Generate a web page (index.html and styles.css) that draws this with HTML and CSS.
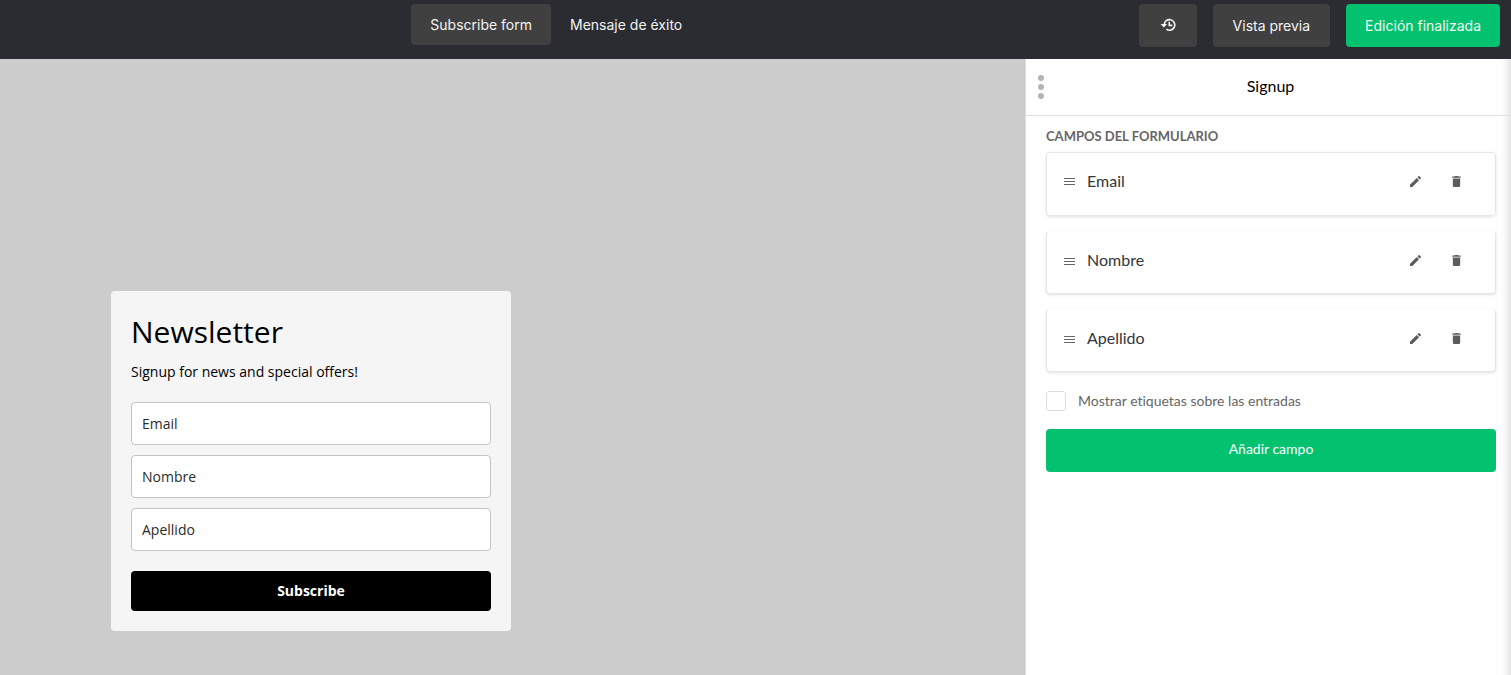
FILE: index.html
```html
<!DOCTYPE html>
<html lang="es">
<head>
    <meta charset="UTF-8">
    <meta name="viewport" content="width=device-width, initial-scale=1.0">
    <title>Editor de formulario</title>
    <link rel="stylesheet" href="styles.css">
</head>
<body>

<!-- Iconos compartidos -->
<svg class="sprite" aria-hidden="true">
    <symbol id="icon-drag" viewBox="0 0 12 12">
        <path d="M1 3.5h11M1 6.5h11M1 9.5h11" fill="none" stroke="currentColor" stroke-width="1"/>
    </symbol>
    <symbol id="icon-edit" viewBox="3 3 18 18">
        <path d="M3 17.25V21h3.75L17.81 9.94l-3.75-3.75L3 17.25zM20.71 7.04a1 1 0 0 0 0-1.41l-2.34-2.34a1 1 0 0 0-1.41 0l-1.83 1.83 3.75 3.75 1.83-1.83z" fill="currentColor"/>
    </symbol>
    <symbol id="icon-delete" viewBox="3 3 18 18">
        <path d="M6 19c0 1.1.9 2 2 2h8c1.1 0 2-.9 2-2V7H6v12zM19 4h-3.5l-1-1h-5l-1 1H5v2h14V4z" fill="currentColor"/>
    </symbol>
</svg>

<header class="topbar">
    <nav class="tabs">
        <button type="button" class="tab active">Subscribe form</button>
        <button type="button" class="tab">Mensaje de éxito</button>
    </nav>
    <div class="actions">
        <button type="button" class="btn" aria-label="Historial">
            <svg width="18" height="16" viewBox="0 0 18 16" fill="none" stroke="currentColor">
                <path d="M5.2 6.8A5.3 5.3 0 1 1 7.4 11.2" stroke-width="1.6"/>
                <path d="M1.6 6h6.6L4.9 9.6z" fill="currentColor" stroke="none"/>
                <path d="M10.3 3.8v3.6h3" stroke-width="1.6"/>
            </svg>
        </button>
        <button type="button" class="btn">Vista previa</button>
        <button type="button" class="btn btn-done">Edición finalizada</button>
    </div>
</header>

<div class="editor">
    <main class="canvas">
        <form class="form-card">
            <h1>Newsletter</h1>
            <p>Signup for news and special offers!</p>
            <input type="email" placeholder="Email" aria-label="Email">
            <input type="text" placeholder="Nombre" aria-label="Nombre">
            <input type="text" placeholder="Apellido" aria-label="Apellido">
            <button type="button" class="subscribe">Subscribe</button>
        </form>
    </main>

    <aside class="sidebar">
        <div class="sidebar-header">
            <button type="button" class="menu" aria-label="Menú">
                <svg width="6" height="24" viewBox="0 0 6 24" fill="currentColor">
                    <circle cx="3" cy="3" r="3"/>
                    <circle cx="3" cy="12" r="3"/>
                    <circle cx="3" cy="21" r="3"/>
                </svg>
            </button>
            <h2>Signup</h2>
        </div>

        <div class="sidebar-body">
            <h3>CAMPOS DEL FORMULARIO</h3>
            <ul class="fields">
                <li class="field">
                    <svg class="drag"><use href="#icon-drag"/></svg>
                    <span class="field-name">Email</span>
                    <button type="button" class="icon-btn" aria-label="Editar Email"><svg><use href="#icon-edit"/></svg></button>
                    <button type="button" class="icon-btn" aria-label="Eliminar Email"><svg><use href="#icon-delete"/></svg></button>
                </li>
                <li class="field">
                    <svg class="drag"><use href="#icon-drag"/></svg>
                    <span class="field-name">Nombre</span>
                    <button type="button" class="icon-btn" aria-label="Editar Nombre"><svg><use href="#icon-edit"/></svg></button>
                    <button type="button" class="icon-btn" aria-label="Eliminar Nombre"><svg><use href="#icon-delete"/></svg></button>
                </li>
                <li class="field">
                    <svg class="drag"><use href="#icon-drag"/></svg>
                    <span class="field-name">Apellido</span>
                    <button type="button" class="icon-btn" aria-label="Editar Apellido"><svg><use href="#icon-edit"/></svg></button>
                    <button type="button" class="icon-btn" aria-label="Eliminar Apellido"><svg><use href="#icon-delete"/></svg></button>
                </li>
            </ul>

            <label class="check" for="show-labels">
                <input type="checkbox" id="show-labels">
                Mostrar etiquetas sobre las entradas
            </label>

            <button type="button" class="add-field">Añadir campo</button>
        </div>
    </aside>
</div>

</body>
</html>
```

FILE: styles.css
```css
* {
    box-sizing: border-box;
}

body {
    margin: 0;
    min-height: 100vh;
    display: flex;
    flex-direction: column;
    font-family: Inter, "Liberation Sans", sans-serif;
    font-size: 14px;
    color: #000;
}

button, input {
    font-family: inherit;
    font-size: 14px;
}

button {
    border: 0;
    padding: 0;
    border-radius: 4px;
    cursor: pointer;
}

h1, h2, h3, p, ul {
    margin: 0;
    padding: 0;
    font-weight: 400;
}

svg {
    display: block;
}

.sprite {
    position: absolute;
    width: 0;
    height: 0;
}

/* Barra superior */
.topbar {
    display: flex;
    height: 59px;
    padding: 4px 11px 12px 0;
    background-color: #2a2c31;
}

.tabs {
    flex: 1;
    display: flex;
    justify-content: center;
    align-items: flex-start;
}

.tab {
    height: 41px;
    padding: 0 19px;
    background-color: transparent;
    color: #f4f4f4;
}

.tab.active {
    background-color: #404040;
}

.actions {
    display: flex;
    gap: 16px;
    margin-left: 26px;
}

.btn {
    height: 43px;
    padding: 0 20px;
    background-color: #404040;
    color: #f4f4f4;
}

.btn-done {
    padding: 0 19px;
    background-color: #02c26f;
}

.editor {
    flex: 1;
    display: flex;
}

/* Vista del formulario */
.canvas {
    flex: 1;
    display: flex;
    align-items: flex-end;
    padding: 20px 20px 44px 111px;
    background-color: #ccc;
    font-family: "Open Sans", sans-serif;
}

.form-card {
    display: flex;
    flex-direction: column;
    gap: 10px;
    width: 400px;
    padding: 20px;
    border-radius: 4px;
    background-color: #f5f5f5;
}

.form-card h1 {
    font-size: 30px;
    line-height: 41px;
}

.form-card p {
    line-height: 20px;
    margin-bottom: 10px;
}

.form-card input {
    height: 43px;
    padding: 0 10px;
    border: 1px solid #c4c4c4;
    border-radius: 4px;
    background-color: #fff;
}

.form-card input::placeholder {
    color: #2b2b2b;
}

.subscribe {
    height: 40px;
    margin-top: 10px;
    padding-bottom: 2px;
    background-color: #000;
    color: #fff;
    font-weight: 700;
}

/* Panel lateral */
.sidebar {
    width: 486px;
    border-left: 1px solid #dcdfe2;
    background-color: #fff;
    box-shadow: inset -12px 0 10px -10px rgba(0, 0, 0, 0.16);
    color: #666;
    font-family: Lato, sans-serif;
    font-variant-ligatures: none;
}

.sidebar-header {
    display: flex;
    align-items: center;
    height: 57px;
    padding: 0 12px;
    border-bottom: 1px solid #dfe2e5;
}

.sidebar-header h2 {
    flex: 1;
    padding: 0 2px 4px 0;
    color: #000;
    font-size: 16px;
    text-align: center;
}

.menu {
    background-color: transparent;
    color: #b3b3b3;
}

.sidebar-body {
    padding: 12px 15px 20px 20px;
}

.sidebar-body h3 {
    font-size: 13px;
    font-weight: 700;
    line-height: 16px;
    margin-bottom: 8px;
}

.fields {
    display: flex;
    flex-direction: column;
    gap: 15px;
    list-style: none;
}

.field {
    display: flex;
    align-items: center;
    height: 64px;
    padding: 0 18px 6px 16px;
    border: 1px solid #e3e6e9;
    border-radius: 4px;
    box-shadow: 0 1px 3px rgba(0, 0, 0, 0.12);
}

.field + .field {
    height: 63px;
    padding-bottom: 4px;
    border-top-color: transparent;
}

.drag {
    width: 12px;
    height: 12px;
}

.field-name {
    flex: 1;
    padding: 0 0 2px 12px;
    color: #33363b;
    font-size: 16px;
}

.icon-btn {
    display: flex;
    justify-content: center;
    width: 41px;
    background-color: transparent;
    color: #5c5c5c;
}

.icon-btn svg {
    width: 11px;
    height: 11px;
}

.check {
    display: flex;
    align-items: center;
    gap: 12px;
    margin: 19px 0 18px;
    font-size: 14px;
    line-height: 20px;
}

.check input {
    appearance: none;
    width: 20px;
    height: 20px;
    margin: 0;
    border: 1px solid #dcdfe2;
    border-radius: 3px;
    background-color: #fff;
}

.check input:checked {
    background-color: #02c26f;
}

.add-field {
    width: 100%;
    height: 43px;
    padding-bottom: 4px;
    background-color: #02c26f;
    color: #fff;
    font-size: 14px;
}
```
